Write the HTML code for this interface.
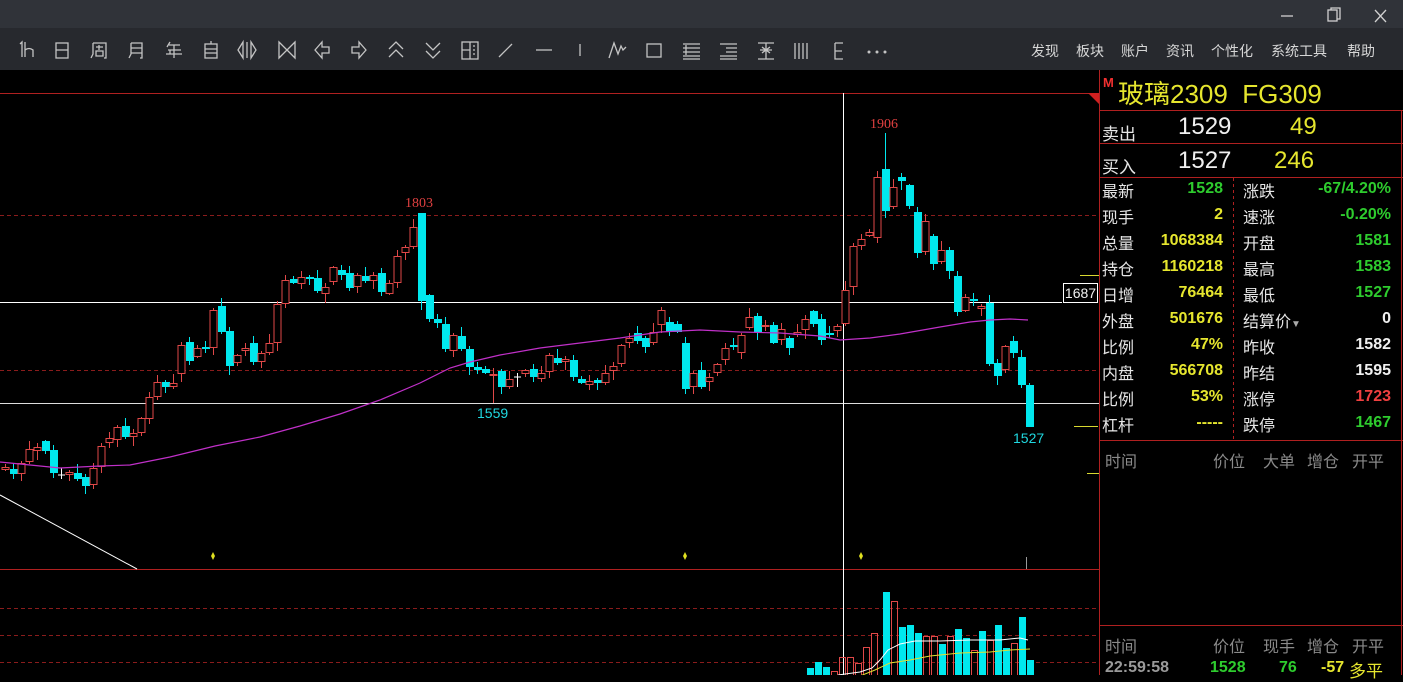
<!DOCTYPE html>
<html><head><meta charset="utf-8"><style>
*{margin:0;padding:0;box-sizing:border-box}
body{width:1403px;height:675px;overflow:hidden;background:#000;font-family:"Liberation Sans","Noto Sans CJK SC",sans-serif;position:relative}
#tb{position:absolute;left:0;top:0;width:1403px;height:28px;background:#303339}
#tool{position:absolute;left:0;top:28px;width:1403px;height:42px;background:#27292e}
.menu{position:absolute;top:41px;font-size:14px;color:#d6d6d6}
.t{position:absolute;white-space:nowrap}
.lb{font-size:16px;color:#e6e6e6}
.n{font-size:16px;font-weight:bold;text-align:right}
.g{color:#2ecc2e}.y{color:#e6e62e}.w{color:#f0f0f0}.r{color:#f04040}
.gr{color:#8a8a8a;font-size:16px}
</style></head><body>
<div id="tb"></div><div id="tool"></div>
<svg style="position:absolute;left:0;top:0" width="1403" height="70">
<g stroke="#d0d0d0" stroke-width="1.3" fill="none">
<path d="M1281 16h12"/><rect x="1328" y="10" width="9" height="11"/><path d="M1331 10v-2h9v11h-3"/><path d="M1375 10l11 12M1386 10l-11 12"/>
</g>
<g stroke="#c4c4c4" stroke-width="1.3" fill="none">
<path d="M20 44l2-2v15M25 42v15M25 50q4-3 8 0v7"/>
<rect x="56" y="43" width="12" height="15"/><path d="M56 50h12"/>
<path d="M93 43h13v15h-2M93 43v11l-2 4M96 47h7M99 45v5M96 51h7v5h-7z"/>
<path d="M131 43h11v15h-2M131 43v11l-2 4M131 48h11M131 53h11"/>
<path d="M170 42l-3 5M169 45h11M168 50h13M166 54h16M174 45v13M170 50v4"/>
<rect x="205" y="44" width="12" height="14"/><path d="M205 49h12M205 53h12M211 41v3"/>
<path d="M243 42l-5 8 5 8zM251 42l5 8-5 8zM247 42v16"/>
<path d="M279 42l8 8-8 8zM295 42l-8 8 8 8z"/>
<path d="M315 50l7-8v5h7v6h-7v5z"/>
<path d="M366 50l-7-8v5h-7v6h7v5z"/>
<path d="M389 49l7-7 7 7M389 57l7-7 7 7"/>
<path d="M426 43l7 7 7-7M426 51l7 7 7-7"/>
<rect x="462" y="42" width="16" height="17"/><path d="M470 42v17M462 50h8M473 46h2M473 50h2M473 54h2"/>
<path d="M499 57l13-13"/>
<path d="M536 50h16"/>
<path d="M580 44v12"/>
<path d="M609 58l5-15 4 11 3-8 2 4 3-3"/>
<rect x="647" y="44" width="14" height="13"/>
<path d="M683 44h17M683 48h17M683 52h17M683 56h17M683 59h17M686 45v10"/>
<path d="M720 44h17M726 48h11M726 52h11M720 56h17M720 59h17"/>
<path d="M758 43h16M766 43v16M760 50h12M758 59h16M762 47l8 6M770 47l-8 6"/>
<path d="M795 43v16M799 43v16M803 43v16M807 43v16"/>
<path d="M835 43v16h8M835 43h8M835 51h7"/>
</g>
<g fill="#c4c4c4"><circle cx="869" cy="52" r="1.5"/><circle cx="877" cy="52" r="1.5"/><circle cx="885" cy="52" r="1.5"/></g>
</svg>
<div class="menu" style="left:1031px">发现</div>
<div class="menu" style="left:1076px">板块</div>
<div class="menu" style="left:1121px">账户</div>
<div class="menu" style="left:1166px">资讯</div>
<div class="menu" style="left:1211px">个性化</div>
<div class="menu" style="left:1271px">系统工具</div>
<div class="menu" style="left:1347px">帮助</div>

<svg id="ch" style="position:absolute;left:0;top:70px" width="1403" height="605" viewBox="0 70 1403 605"></svg>

<div class="t" style="left:1103px;top:75px;color:#f03030;font-size:13px;font-weight:bold">M</div>
<div class="t y" style="left:1118px;top:74px;font-size:26px">玻璃2309&nbsp;&nbsp;FG309</div>
<div class="t lb" style="left:1102px;top:120px;font-size:17px">卖出</div>
<div class="t w" style="left:1178px;top:113px;font-size:24px">1529</div>
<div class="t y" style="left:1290px;top:113px;font-size:24px">49</div>
<div class="t lb" style="left:1102px;top:153px;font-size:17px">买入</div>
<div class="t w" style="left:1178px;top:147px;font-size:24px">1527</div>
<div class="t y" style="left:1274px;top:147px;font-size:24px">246</div>
<div id="rows"></div>
<div class="t gr" style="left:1105px;top:448px">时间</div>
<div class="t gr" style="left:1213px;top:448px">价位</div>
<div class="t gr" style="left:1263px;top:448px">大单</div>
<div class="t gr" style="left:1307px;top:448px">增仓</div>
<div class="t gr" style="left:1352px;top:448px">开平</div>
<div class="t gr" style="left:1105px;top:633px">时间</div>
<div class="t gr" style="left:1213px;top:633px">价位</div>
<div class="t gr" style="left:1263px;top:633px">现手</div>
<div class="t gr" style="left:1307px;top:633px">增仓</div>
<div class="t gr" style="left:1352px;top:633px">开平</div>
<div class="t n" style="left:1105px;top:659px;color:#9a9a9a">22:59:58</div>
<div class="t n g" style="left:1210px;top:659px">1528</div>
<div class="t n g" style="left:1279px;top:659px">76</div>
<div class="t n y" style="left:1321px;top:659px">-57</div>
<div class="t y" style="left:1349px;top:657px;font-size:17px">多平</div>
<div class="t w" style="left:1063px;top:283px;width:35px;height:20px;border:1px solid #fff;font-size:14px;text-align:center;line-height:18px">1687</div>
<div class="t r" style="left:870px;top:117px;font-size:14px;font-family:'Liberation Serif',serif;color:#e04040">1906</div>
<div class="t r" style="left:405px;top:196px;font-size:14px;font-family:'Liberation Serif',serif;color:#e04040">1803</div>
<div class="t" style="left:477px;top:405px;font-size:14px;color:#20d8e0">1559</div>
<div class="t" style="left:1013px;top:430px;font-size:14px;color:#20d8e0">1527</div>
<script>
var C=[[5,'r',467,470],[13,'c',469,474],[21,'r',463,474],[29,'r',449,462],[37,'r',447,451],[45,'c',441,451],[53,'c',450,473],[61,'x',475,476],[69,'r',472,475],[77,'c',473,479],[85,'c',477,486],[93,'r',468,485],[101,'r',446,467],[109,'r',438,443],[117,'r',427,440],[125,'c',426,437],[133,'r',433,437],[141,'r',418,433],[149,'r',397,419],[157,'r',382,397],[165,'c',382,387],[173,'r',383,387],[181,'r',345,374],[189,'c',342,361],[197,'r',348,357],[205,'c',347,348],[213,'r',310,348],[221,'c',306,332],[229,'c',331,366],[237,'r',355,363],[245,'r',348,351],[253,'c',343,362],[261,'r',353,362],[269,'r',343,353],[277,'r',304,343],[285,'r',280,304],[293,'c',279,283],[301,'r',277,284],[309,'c',277,278],[317,'c',278,291],[325,'r',287,294],[333,'r',267,282],[341,'c',270,275],[349,'c',273,288],[357,'r',275,287],[365,'c',276,281],[373,'r',275,281],[381,'c',273,292],[389,'r',283,294],[397,'r',256,283],[405,'r',247,253],[413,'r',227,247],[421,'c',213,301],[429,'c',295,319],[437,'c',319,323],[445,'c',324,349],[453,'r',335,351],[461,'c',336,349],[469,'c',349,367],[477,'c',367,370],[485,'c',369,373],[493,'r',374,375],[501,'c',371,387],[509,'r',379,387],[517,'x',377,378],[525,'r',370,374],[533,'c',369,377],[541,'r',373,379],[549,'r',355,372],[557,'c',358,363],[565,'r',359,362],[573,'c',360,377],[581,'c',379,383],[589,'r',381,385],[597,'c',380,383],[605,'r',373,383],[613,'r',366,371],[621,'r',345,364],[629,'r',338,343],[637,'c',333,341],[645,'c',338,347],[653,'r',332,343],[661,'r',310,325],[669,'c',322,332],[677,'c',324,332],[685,'c',343,389],[693,'r',373,387],[701,'c',370,387],[709,'r',377,382],[717,'r',364,373],[725,'r',348,360],[733,'c',345,347],[741,'r',335,353],[749,'r',317,328],[757,'c',316,332],[765,'r',325,327],[773,'c',325,343],[781,'r',329,340],[789,'c',338,348],[797,'r',332,335],[805,'r',319,330],[813,'c',311,324],[821,'c',319,340],[829,'c',333,335],[837,'r',326,331],[845,'r',290,324],[853,'r',246,287],[861,'r',239,246],[869,'r',232,236],[877,'r',177,238],[885,'c',169,211],[893,'r',187,207],[901,'c',177,181],[909,'c',185,206],[917,'c',212,253],[925,'r',221,252],[933,'c',236,264],[941,'r',250,262],[949,'c',250,271],[957,'c',276,312],[965,'r',297,311],[973,'c',299,301],[981,'r',306,309],[989,'c',303,364],[997,'c',363,376],[1005,'r',346,370],[1013,'c',341,353],[1021,'c',357,385],[1029,'c',385,427]];
var s='';
s+='<line x1="0" y1="93.5" x2="1099" y2="93.5" stroke="#b02020"/>';
[215.5,370.5,608.5,635.5,662.5].forEach(function(y){s+='<line x1="0" y1="'+y+'" x2="1099" y2="'+y+'" stroke="#8a1c1c" stroke-dasharray="4,3"/>';});
s+='<line x1="0" y1="569.5" x2="1099" y2="569.5" stroke="#b02020"/>';
s+='<line x1="1099.5" y1="70" x2="1099.5" y2="675" stroke="#b02020"/>';
s+='<line x1="1401.5" y1="110" x2="1401.5" y2="675" stroke="#b02020"/>';
[110.5,143.5,177.5,440.5,625.5].forEach(function(y){s+='<line x1="1099" y1="'+y+'" x2="1403" y2="'+y+'" stroke="#b02020"/>';});
s+='<line x1="1233.5" y1="178" x2="1233.5" y2="440" stroke="#b02020" stroke-dasharray="3,3"/>';
s+='<path d="M1088 93h11v11z" fill="#d02020"/>';
s+='<line x1="0" y1="302.5" x2="1062" y2="302.5" stroke="#fff"/><line x1="0" y1="403.5" x2="1099" y2="403.5" stroke="#ddd"/>';
s+='<line x1="843.5" y1="93" x2="843.5" y2="675" stroke="#fff"/>';
s+='<line x1="0" y1="495" x2="137" y2="569" stroke="#fff"/>';
s+='<path d="M1074 426.5h24M1080 275.5h19M1087 473.5h12" stroke="#d8d830"/>';
[213,685,861].forEach(function(x){s+='<path d="M'+x+' 552l2 4-2 4-2-4z" fill="#e0e020"/>';});
s+='<line x1="1026.5" y1="557" x2="1026.5" y2="569" stroke="#999"/>';
var hl=[3,6,2,8,4,1,5,7,2,9,3,5];
C.forEach(function(c,i){var x=c[0],t=c[2],b=c[3],h=hl[i%12],l=hl[(i+5)%12];
if(i==52)h=0; if(i==110)h=36; if(i==61)l=28; if(i==128)l=0; if(i==12) l=6;
var col=c[1]=='r'?'#e04848':(c[1]=='c'?'#00e8ee':'#fff');
s+='<line x1="'+(x+.5)+'" y1="'+(t-h)+'" x2="'+(x+.5)+'" y2="'+(b+l)+'" stroke="'+col+'"/>';
if(c[1]=='r')s+='<rect x="'+(x-3)+'" y="'+(t+.5)+'" width="7" height="'+Math.max(1,b-t-1)+'" fill="#000" stroke="'+col+'"/>';
else if(c[1]=='c')s+='<rect x="'+(x-3)+'" y="'+t+'" width="8" height="'+Math.max(2,b-t)+'" fill="'+col+'"/>';
else s+='<line x1="'+(x-3)+'" y1="'+t+'" x2="'+(x+4)+'" y2="'+t+'" stroke="#fff"/>';});
s+='<polyline fill="none" stroke="#c030c8" stroke-width="1.2" points="0,462 30,465 60,468 100,466 130,465 170,457 215,446 260,437 300,426 340,414 380,400 420,383 450,368 470,362 500,355 540,348 580,343 620,338 660,332 700,330 740,332 780,333 820,336 840,340 870,338 900,334 940,327 970,322 990,320 1010,319 1028,320"/>';
var V=[[810,'c',668],[818,'c',662],[826,'c',667],[834,'r',671],[842,'r',657],[850,'r',657],[858,'r',663],[866,'r',647],[874,'r',633],[886,'c',592],[894,'r',601],[902,'c',627],[910,'c',625],[918,'c',633],[926,'r',636],[934,'r',636],[942,'c',644],[950,'r',636],[958,'c',629],[966,'c',638],[974,'r',650],[982,'c',631],[990,'r',640],[998,'c',625],[1006,'c',648],[1014,'r',643],[1022,'c',617],[1030,'c',660]];
V.forEach(function(v){if(v[1]=='c')s+='<rect x="'+(v[0]-3)+'" y="'+v[2]+'" width="7" height="'+(676-v[2])+'" fill="#00e8ee"/>';else s+='<rect x="'+(v[0]-2.5)+'" y="'+(v[2]+.5)+'" width="6" height="'+(676-v[2])+'" fill="none" stroke="#e04848"/>';});
s+='<polyline fill="none" stroke="#fff" points="838,675 860,672 872,668 880,660 888,650 900,644 915,641 940,641 970,640 1000,640 1020,638 1028,640"/>';
s+='<polyline fill="none" stroke="#e0e030" points="860,676 875,670 890,663 910,660 930,656 960,653 990,652 1010,650 1030,649"/>';
document.getElementById('ch').innerHTML=s;
var R=[['最新','1528','g','涨跌','-67/4.20%','g'],['现手','2','y','速涨','-0.20%','g'],['总量','1068384','y','开盘','1581','g'],['持仓','1160218','y','最高','1583','g'],['日增','76464','y','最低','1527','g'],['外盘','501676','y','结算价','0','w'],['比例','47%','y','昨收','1582','w'],['内盘','566708','y','昨结','1595','w'],['比例','53%','y','涨停','1723','r'],['杠杆','-----','y','跌停','1467','g']];
var h='';R.forEach(function(r,i){var y=178+i*26;
h+='<div class="t lb" style="left:1102px;top:'+y+'px">'+r[0]+'</div>';
h+='<div class="t n '+r[2]+'" style="left:1125px;width:98px;top:'+(y+2)+'px">'+r[1]+'</div>';
h+='<div class="t lb" style="left:1243px;top:'+y+'px">'+r[3]+(i==5?'<span style="font-size:10px;color:#aaa">▼</span>':'')+'</div>';
h+='<div class="t n '+r[5]+'" style="left:1285px;width:106px;top:'+(y+2)+'px">'+r[4]+'</div>';});
document.getElementById('rows').innerHTML=h;
</script>
</body></html>
